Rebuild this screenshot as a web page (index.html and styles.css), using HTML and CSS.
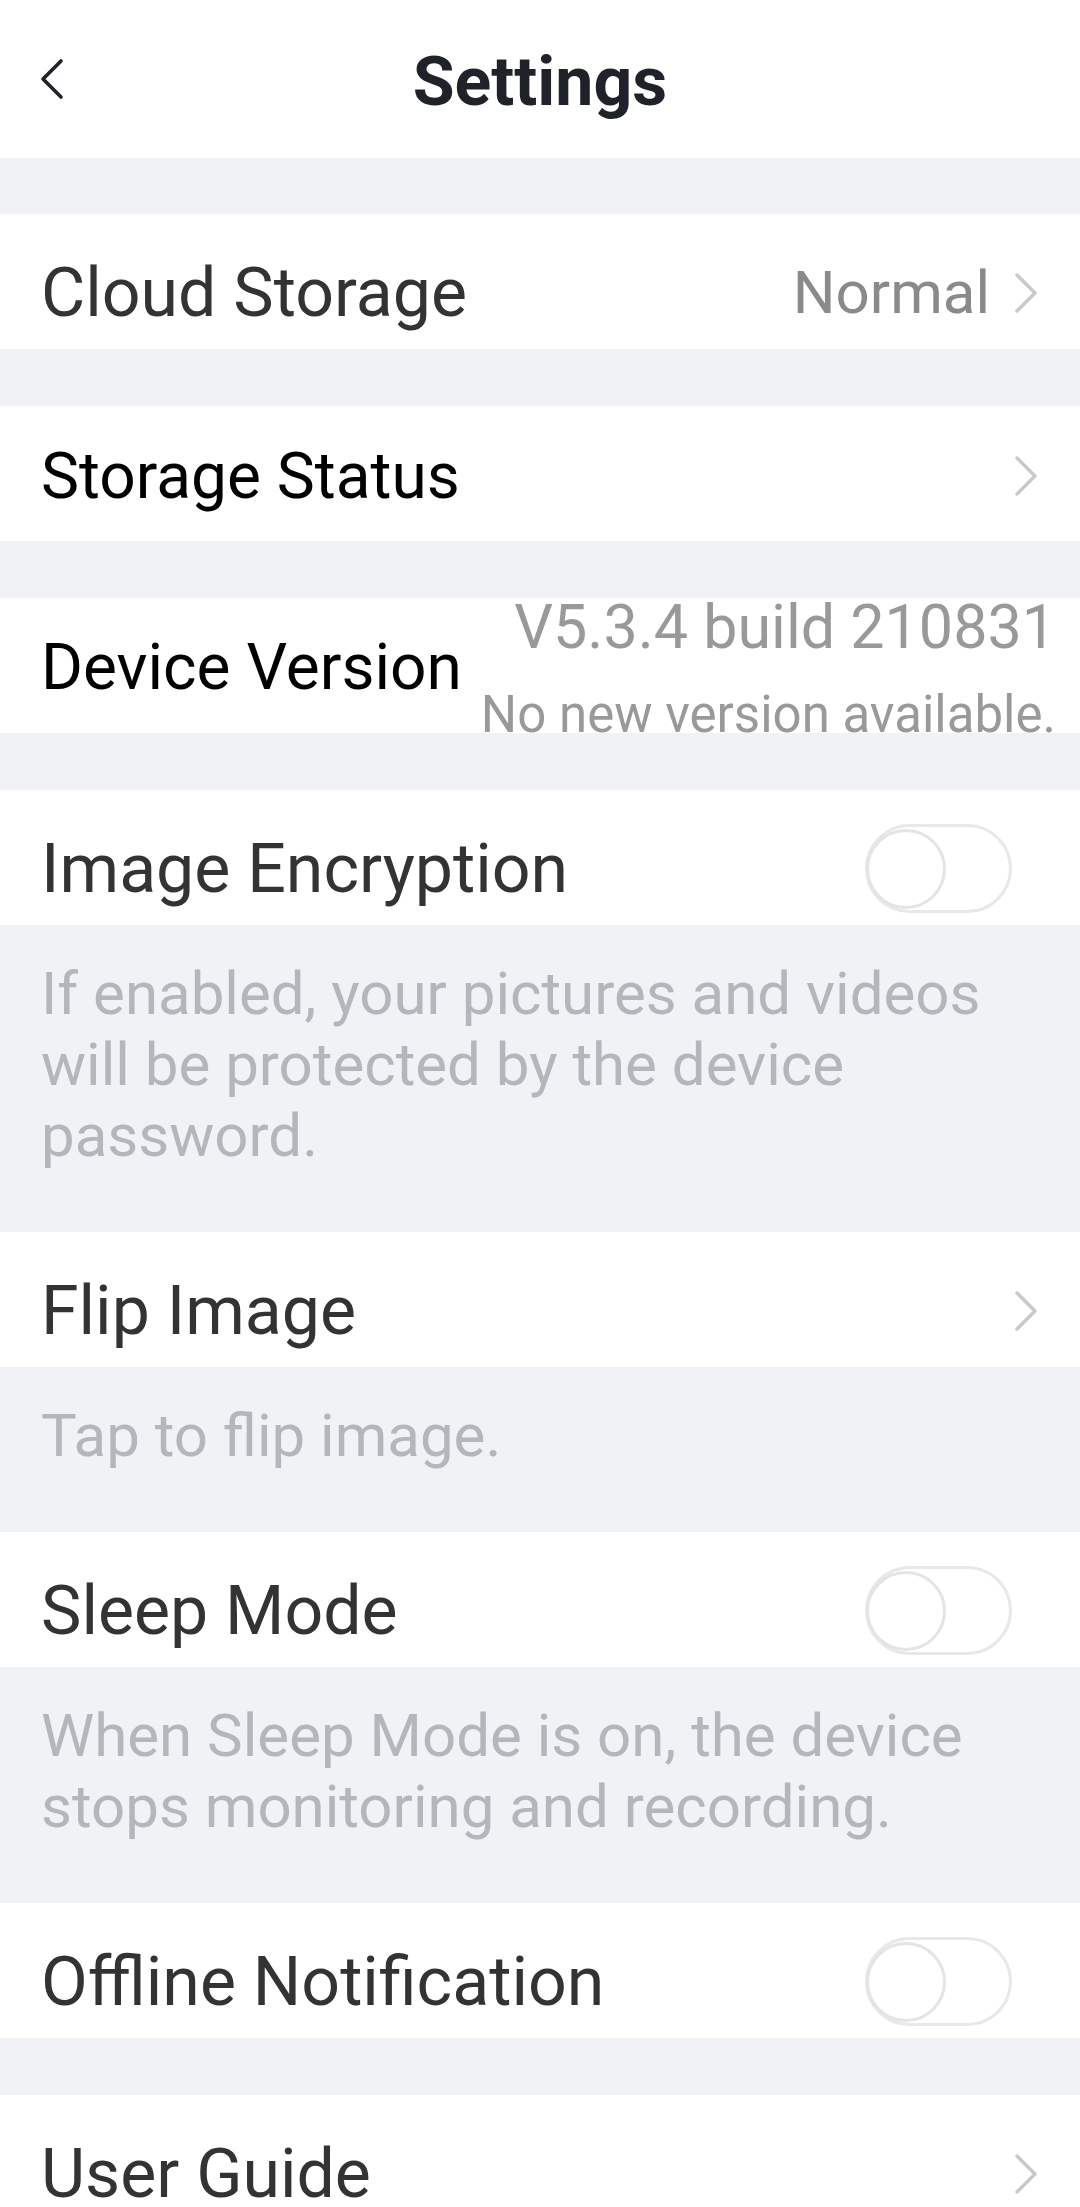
FILE: index.html
```html
<!doctype html>
<html lang="en">
<head>
  <title>Settings</title>
  <meta charset="utf-8">
  <link rel="stylesheet" href="styles.css">
</head>
<body>

<header class="topBar">
  <button class="backButton" aria-label="Back">
    <svg width="28" height="44" viewBox="0 0 28 44">
      <path d="M23 4 L5 22 L23 40" fill="none" stroke="#1f2329" stroke-width="3.6" stroke-linecap="round" stroke-linejoin="round"/>
    </svg>
  </button>
  <h1 class="title">Settings</h1>
  <span></span>
</header>

<main class="settingsList">

  <div class="row">
    <span class="rowLabel">Cloud Storage</span>
    <span class="rowValue">Normal</span>
    <svg class="chevron" width="24" height="40" viewBox="0 0 24 40">
      <path d="M3 2 L21 20 L3 38" fill="none" stroke="#c9c9c9" stroke-width="3.4" stroke-linecap="round" stroke-linejoin="round"/>
    </svg>
  </div>

  <div class="row rowDark">
    <span class="rowLabel">Storage Status</span>
    <svg class="chevron" width="24" height="40" viewBox="0 0 24 40">
      <path d="M3 2 L21 20 L3 38" fill="none" stroke="#c9c9c9" stroke-width="3.4" stroke-linecap="round" stroke-linejoin="round"/>
    </svg>
  </div>

  <div class="row rowDark versionRow">
    <span class="rowLabel">Device Version</span>
    <div class="versionInfo">
      <div class="versionNumber">V5.3.4 build 210831</div>
      <div class="versionStatus">No new version available.</div>
    </div>
  </div>

  <div class="row">
    <span class="rowLabel">Image Encryption</span>
    <span class="toggle"><span class="toggleKnob"></span></span>
  </div>
  <p class="note">If enabled, your pictures and videos will be protected by the device password.</p>

  <div class="row">
    <span class="rowLabel">Flip Image</span>
    <svg class="chevron" width="24" height="40" viewBox="0 0 24 40">
      <path d="M3 2 L21 20 L3 38" fill="none" stroke="#c9c9c9" stroke-width="3.4" stroke-linecap="round" stroke-linejoin="round"/>
    </svg>
  </div>
  <p class="note">Tap to flip image.</p>

  <div class="row">
    <span class="rowLabel">Sleep Mode</span>
    <span class="toggle"><span class="toggleKnob"></span></span>
  </div>
  <p class="note">When Sleep Mode is on, the device stops monitoring and recording.</p>

  <div class="row">
    <span class="rowLabel">Offline Notification</span>
    <span class="toggle"><span class="toggleKnob"></span></span>
  </div>

  <div class="row">
    <span class="rowLabel">User Guide</span>
    <svg class="chevron" width="24" height="40" viewBox="0 0 24 40">
      <path d="M3 2 L21 20 L3 38" fill="none" stroke="#c9c9c9" stroke-width="3.4" stroke-linecap="round" stroke-linejoin="round"/>
    </svg>
  </div>

</main>

</body>
</html>
```

FILE: styles.css
```css
body {
  margin: 0;
  background-color: #f1f2f6;
  font-family: Roboto, "Liberation Sans", sans-serif;
}

.topBar {
  display: grid;
  grid-template-columns: 1fr auto 1fr;
  align-items: center;
  height: 158px;
  box-sizing: border-box;
  padding-top: 6px;
  background-color: #fff;
}

.backButton {
  justify-self: start;
  display: flex;
  margin: 0 0 6px 38px;
  padding: 0;
  border: none;
  background: none;
}

.title {
  margin: 0;
  font-size: 68px;
  font-weight: 700;
  color: #1f2329;
}

.settingsList {
  display: flex;
  flex-direction: column;
  padding-top: 56px;
}

.row {
  display: flex;
  align-items: center;
  height: 135px;
  box-sizing: border-box;
  padding: 22px 42px 0 41px;
  background-color: #fff;
}

.row + .row {
  margin-top: 57px;
}

.rowLabel {
  flex: 1;
  font-size: 68px;
  color: #333;
  white-space: nowrap;
}

.rowDark {
  padding-top: 5px;
}

.rowDark .rowLabel {
  font-size: 64px;
  color: #000;
}

.rowValue {
  margin-right: 24px;
  font-size: 60px;
  color: #8a8a8a;
}

.chevron {
  flex: none;
}

.versionRow {
  padding: 4px 24px 0 41px;
  overflow: hidden;
}

.versionInfo {
  display: flex;
  flex-direction: column;
  align-items: flex-end;
  color: #999;
  white-space: nowrap;
}

.versionNumber {
  font-size: 61px;
  line-height: 64px;
}

.versionStatus {
  margin-top: 31px;
  font-size: 51px;
  line-height: 50px;
}

.toggle {
  display: flex;
  align-items: center;
  width: 147px;
  height: 89px;
  box-sizing: border-box;
  margin-right: 26px;
  border: 3px solid #e8e8e8;
  border-radius: 45px;
  background-color: #fff;
}

.toggleKnob {
  width: 80px;
  height: 80px;
  box-sizing: border-box;
  margin-left: -2px;
  border: 3px solid #e4e4e4;
  border-radius: 50%;
  background-color: #fff;
}

.note {
  margin: 0;
  padding: 33px 41px 61px;
  font-size: 60px;
  line-height: 71px;
  color: #b4b6bb;
}
```
